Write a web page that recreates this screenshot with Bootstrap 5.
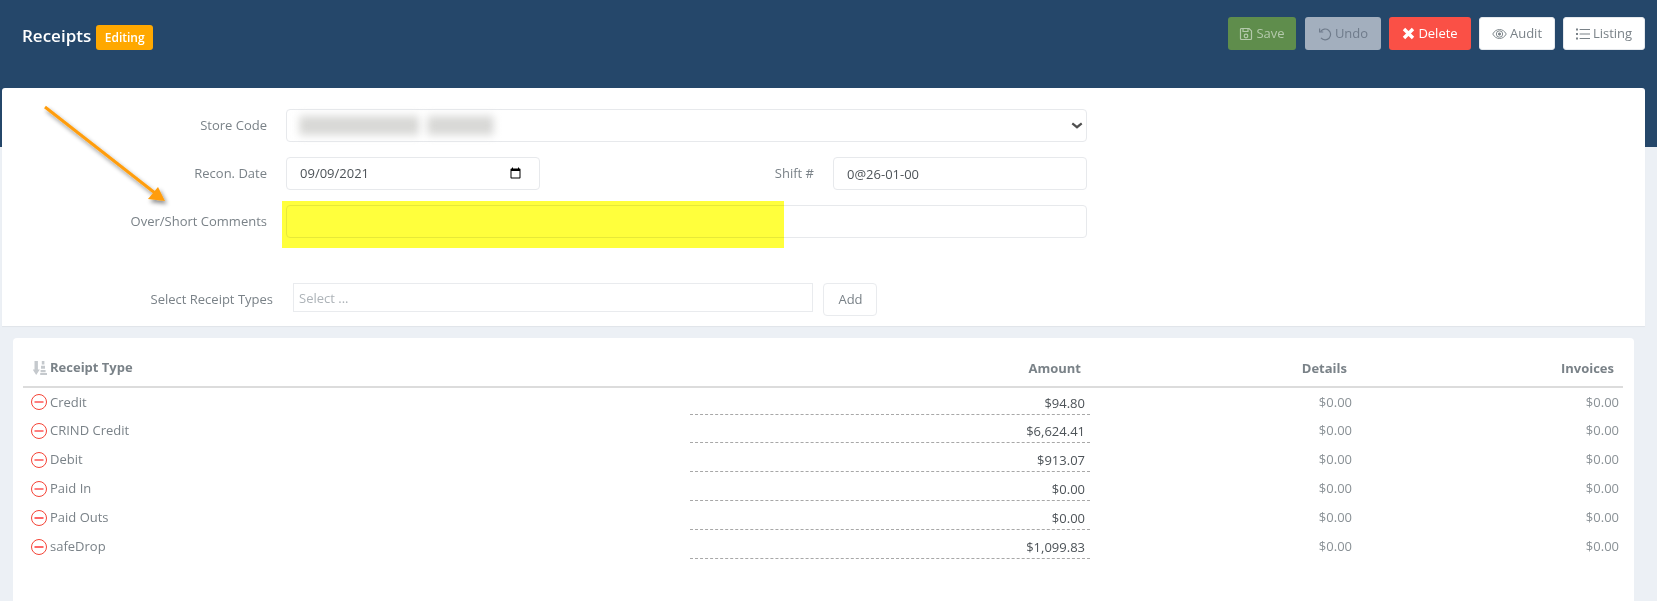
<!DOCTYPE html>
<html lang="en">
<head>
<meta charset="utf-8">
<title>Receipts</title>
<link href="https://cdn.jsdelivr.net/npm/bootstrap@5.3.0/dist/css/bootstrap.min.css" rel="stylesheet">
<style>
html,body{height:601px;overflow:hidden}
body{background:#ecf0f5;font-family:"Open Sans",sans-serif;font-size:13px;color:#7a8288;position:relative}
.hdr{background:#25476a;height:147px;padding:17px 12px 0 22px}
.hdr-title{font-size:17px;font-weight:600;color:#fff;line-height:37px}
.hdr-badge{background:#ffa800;color:#fff;font-size:12px;font-weight:600;border-radius:3px;height:25px;width:57px;margin-left:5px}
.tbtn{height:33px;font-size:13px;padding:0;border-radius:3px;display:inline-flex;align-items:center;justify-content:center;gap:3px;border:1px solid transparent;line-height:1}
.tbtn svg{flex:none}
.b-save{width:68px;background:#5f8d4c;color:#b4c9ab}
.b-undo{width:76px;background:#a3afbe;color:#6f7b8b;margin-left:9px}
.b-del{width:82px;background:#fa5046;color:#fff;margin-left:8px}
.b-audit{width:76px;background:#fff;color:#7a8288;margin-left:8px;border-color:#e5e8ec}
.b-list{width:82px;background:#fff;color:#7a8288;margin-left:8px;border-color:#e5e8ec}
.form-panel{background:#fff;margin:-59px 12px 0 2px;height:238px;padding-top:21px;border-radius:3px 3px 0 0;box-shadow:0 1px 1px rgba(0,0,0,.05)}
.frow{height:33px;margin-bottom:15px}
.flabel{width:265px;text-align:right;color:#7a8288;flex:none;margin:0;line-height:1}
.fctl{height:33px;font-size:13px;border:1px solid #e7e9ec;border-radius:4px;color:#4d5358;padding:0 13px;margin-left:19px;box-shadow:none}
.w-store,.w-comment{width:801px}
.store-select{padding:0 30px 0 15px;background-image:url("data:image/svg+xml,%3csvg xmlns='http://www.w3.org/2000/svg' viewBox='0 0 14 8'%3e%3cpath fill='none' stroke='%23505050' stroke-width='2.6' d='M1.5 1.5 7 6l5.500-4.500'/%3e%3c/svg%3e");background-size:12px 7px;background-position:right 3px center}
.w-date{width:254px;padding-right:15px}
.flabel-shift{width:274px;text-align:right;line-height:1;flex:none}
.w-shift{width:254px;margin-left:19px}
.addrow{margin-top:45px;height:33px}
.addlabel{width:271px;text-align:right;flex:none;line-height:1;padding-top:10px}
.addsel{width:520px;height:29px;margin-left:20px;border:1px solid #e9ebee;padding:1px 5px 0;color:#adb3b8;font-size:13px;line-height:27px;border-radius:0}
.addbtn{width:54px;height:33px;margin-left:10px;font-size:13px;color:#7a8288;background:#fff;border:1px solid #e9ebee;border-radius:4px;padding:0 0 0 1px}
.tbl-panel{background:#fff;margin:12px 23px 0 13px;height:263px;padding:0 10px;border-radius:4px 4px 0 0;overflow:hidden}
.rtable{width:1600px;table-layout:fixed;border-collapse:collapse;margin:0}
.rtable th{height:49px;padding:13px 9px 0 0;font-weight:700;font-size:13px;color:#7a8288;border-bottom:2px solid #dcdcdc;text-align:right;vertical-align:middle;line-height:1}
.rtable th.namecol{text-align:left;padding-left:10px}
.sort-wrap{gap:3px}
.rtable td{height:29px;padding:0 4px 0 0;text-align:right;color:#8a9196;vertical-align:middle;line-height:1;font-size:13px}
.rtable td.namecell{text-align:left;padding-left:8px;color:#7a8288}
.rtable td.amt{padding:0;vertical-align:top}
.amtbox{width:400px;height:27px;margin-left:auto;border-bottom:1px dashed #a8a8a8;color:#4d5358;text-align:right;padding:7px 5px 0 0;line-height:1.3}
.name-in{display:flex;align-items:center;gap:3px}
.ov-yellow{position:absolute;left:282px;top:201px;width:502px;height:47px;background:#ffff3c;mix-blend-mode:multiply}
.ov-blur{position:absolute;left:300px;top:116px;width:194px;height:19px;filter:blur(4px);display:flex;gap:9px}
.ov-blur i{display:block;height:100%;background:repeating-linear-gradient(90deg,#d2d2d0 0 7px,#e2e2e0 7px 11px)}
.ov-arrow{position:absolute;left:30px;top:95px}
</style>
</head>
<body>
<div class="hdr d-flex justify-content-between">
  <div class="d-flex align-items-start">
    <span class="hdr-title">Receipts</span>
    <span class="hdr-badge d-inline-flex align-items-center justify-content-center mt-2">Editing</span>
  </div>
  <div class="d-flex align-items-start">
    <button class="tbtn b-save" type="button"><svg width="14" height="14" viewBox="0 0 14 14" fill="none" stroke="currentColor" stroke-width="1.2"><path d="M1.5 2.500a1 1 0 0 1 1-1h7.600l2.400 2.400v7.600a1 1 0 0 1-1 1h-9a1 1 0 0 1-1-1z"/><path d="M4 1.500v3h5v-3"/><circle cx="7" cy="9" r="1.800"/></svg>Save</button>
    <button class="tbtn b-undo" type="button"><svg width="14" height="14" viewBox="0 0 14 14" fill="none" stroke="currentColor" stroke-width="1.2"><path d="M2.600 4.600A5.400 5.400 0 1 1 3 10.800"/><path d="M1.600 1.400v3.600h3.600"/></svg>Undo</button>
    <button class="tbtn b-del" type="button"><svg width="13" height="13" viewBox="0 0 13 13" fill="none" stroke="currentColor" stroke-width="3.4"><path d="M2 2l9 9M11 2l-9 9"/></svg>Delete</button>
    <button class="tbtn b-audit" type="button"><svg width="15" height="12" viewBox="0 0 16 12" fill="none" stroke="currentColor" stroke-width="1"><path d="M.8 6C2.600 2.800 5 1.200 8 1.200S13.400 2.800 15.200 6C13.400 9.200 11 10.800 8 10.800S2.600 9.200.8 6z"/><circle cx="8" cy="6" r="3.400"/><circle cx="8" cy="6" r="1.200" fill="currentColor"/></svg>Audit</button>
    <button class="tbtn b-list" type="button"><svg width="14" height="12" viewBox="0 0 14 12" fill="none" stroke="currentColor" stroke-width="1.2"><path d="M3.600 1.500H14M3.600 6H14M3.600 10.500H14"/><path d="M0 1.500h2M0 6h2M0 10.500h2" stroke-width="2"/></svg>Listing</button>
  </div>
</div>

<div class="form-panel">
  <div class="frow d-flex align-items-center">
    <label class="flabel">Store Code</label>
    <select class="form-select fctl w-store store-select" aria-label="Store Code"><option></option></select>
  </div>
  <div class="frow d-flex align-items-center">
    <label class="flabel">Recon. Date</label>
    <input class="form-control fctl w-date" type="date" value="2021-09-09">
    <label class="flabel-shift">Shift #</label>
    <input class="form-control fctl w-shift" type="text" value="0@26-01-00">
  </div>
  <div class="frow d-flex align-items-center">
    <label class="flabel">Over/Short Comments</label>
    <input class="form-control fctl w-comment" type="text">
  </div>
  <div class="addrow d-flex align-items-start">
    <label class="addlabel">Select Receipt Types</label>
    <div class="addsel">Select ...</div>
    <button class="addbtn" type="button">Add</button>
  </div>
</div>

<div class="tbl-panel">
  <table class="rtable">
    <colgroup><col style="width:667px"><col style="width:400px"><col style="width:266px"><col style="width:267px"></colgroup>
    <thead>
      <tr>
        <th class="namecol"><span class="d-inline-flex align-items-center sort-wrap"><svg width="14" height="14" viewBox="0 0 14 14" fill="#c5c9cd"><path d="M1.500 0h3.400v8.500H6.800L3.200 14-.4 8.500h1.900z"/><path d="M8.800 0h2.600v3.600H8.800zM8 4.800h4v3H8zM7.600 9h5v2.200h-5zM7.200 12h6.800v2H7.200z"/></svg>Receipt Type</span></th>
        <th>Amount</th><th>Details</th><th>Invoices</th>
      </tr>
    </thead>
    <tbody>
      <tr><td class="namecell"><span class="name-in"><svg width="16" height="16" viewBox="0 0 16 16" fill="none" stroke="#f44336" stroke-width="1"><circle cx="8" cy="8" r="7.500"/><path d="M3.500 8h9" stroke="#f00" stroke-width="1.200"/></svg>Credit</span></td><td class="amt"><div class="amtbox">$94.80</div></td><td>$0.00</td><td>$0.00</td></tr>
      <tr><td class="namecell"><span class="name-in"><svg width="16" height="16" viewBox="0 0 16 16" fill="none" stroke="#f44336" stroke-width="1"><circle cx="8" cy="8" r="7.500"/><path d="M3.500 8h9" stroke="#f00" stroke-width="1.200"/></svg>CRIND Credit</span></td><td class="amt"><div class="amtbox">$6,624.41</div></td><td>$0.00</td><td>$0.00</td></tr>
      <tr><td class="namecell"><span class="name-in"><svg width="16" height="16" viewBox="0 0 16 16" fill="none" stroke="#f44336" stroke-width="1"><circle cx="8" cy="8" r="7.500"/><path d="M3.500 8h9" stroke="#f00" stroke-width="1.200"/></svg>Debit</span></td><td class="amt"><div class="amtbox">$913.07</div></td><td>$0.00</td><td>$0.00</td></tr>
      <tr><td class="namecell"><span class="name-in"><svg width="16" height="16" viewBox="0 0 16 16" fill="none" stroke="#f44336" stroke-width="1"><circle cx="8" cy="8" r="7.500"/><path d="M3.500 8h9" stroke="#f00" stroke-width="1.200"/></svg>Paid In</span></td><td class="amt"><div class="amtbox">$0.00</div></td><td>$0.00</td><td>$0.00</td></tr>
      <tr><td class="namecell"><span class="name-in"><svg width="16" height="16" viewBox="0 0 16 16" fill="none" stroke="#f44336" stroke-width="1"><circle cx="8" cy="8" r="7.500"/><path d="M3.500 8h9" stroke="#f00" stroke-width="1.200"/></svg>Paid Outs</span></td><td class="amt"><div class="amtbox">$0.00</div></td><td>$0.00</td><td>$0.00</td></tr>
      <tr><td class="namecell"><span class="name-in"><svg width="16" height="16" viewBox="0 0 16 16" fill="none" stroke="#f44336" stroke-width="1"><circle cx="8" cy="8" r="7.500"/><path d="M3.500 8h9" stroke="#f00" stroke-width="1.200"/></svg>safeDrop</span></td><td class="amt"><div class="amtbox">$1,099.83</div></td><td>$0.00</td><td>$0.00</td></tr>
    </tbody>
  </table>
</div>

<div class="ov-blur"><i class="flex-grow-1"></i><i style="width:66px"></i></div>
<div class="ov-yellow"></div>
<svg class="ov-arrow" width="150" height="120" viewBox="0 0 150 120">
  <defs><filter id="ash" x="-20%" y="-20%" width="150%" height="150%"><feDropShadow dx="2" dy="3" stdDeviation="2" flood-color="#000" flood-opacity=".45"/></filter></defs>
  <g filter="url(#ash)"><path d="M15 12 L125 98" stroke="#ff9d0a" stroke-width="3" fill="none"/><path d="M135 106 L118 104 L128 92 Z" fill="#ff9d0a"/></g>
</svg>
<script src="https://cdn.jsdelivr.net/npm/bootstrap@5.3.0/dist/js/bootstrap.bundle.min.js"></script>
</body>
</html>
